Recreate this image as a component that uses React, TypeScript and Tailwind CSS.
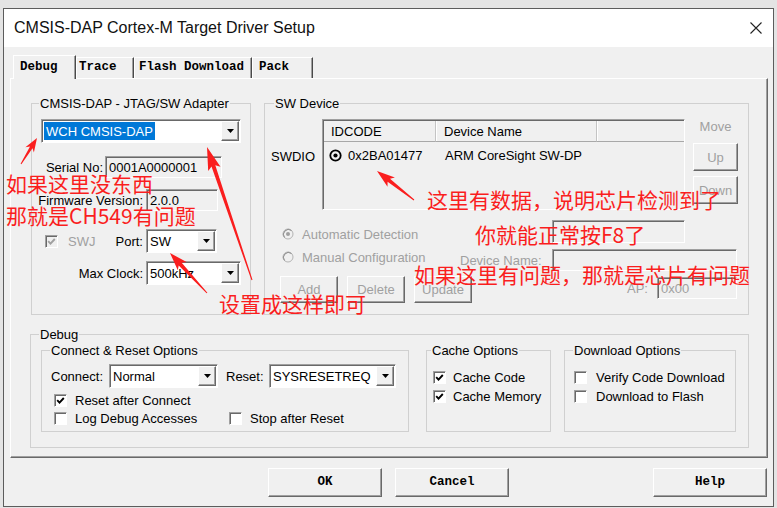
import React from "react";

const SUNK =
  "border border-t-[#a0a0a0] border-l-[#a0a0a0] border-r-white border-b-white shadow-[inset_1px_1px_0_#696969]";
const RAISED =
  "border border-t-white border-l-white border-r-[#696969] border-b-[#696969] shadow-[inset_-1px_-1px_0_#a0a0a0]";
const DIS = "text-[#a0a0a0]";

function arrow(tx: number, ty: number, hx: number, hy: number, hl: number, hw: number, sw: number) {
  const dx = hx - tx;
  const dy = hy - ty;
  const L = Math.hypot(dx, dy);
  const ux = dx / L;
  const uy = dy / L;
  const nx = -uy;
  const ny = ux;
  const bx = hx - ux * hl;
  const by = hy - uy * hl;
  const cx = hx - ux * (hl + 3);
  const cy = hy - uy * (hl + 3);
  const p = [
    [tx + nx * 0.5, ty + ny * 0.5],
    [bx + (nx * sw) / 2, by + (ny * sw) / 2],
    [cx + (nx * hw) / 2, cy + (ny * hw) / 2],
    [hx, hy],
    [cx - (nx * hw) / 2, cy - (ny * hw) / 2],
    [bx - (nx * sw) / 2, by - (ny * sw) / 2],
    [tx - nx * 0.5, ty - ny * 0.5],
  ];
  return p.map((q) => q.map((v) => v.toFixed(1)).join(",")).join(" ");
}

function Combo({ w, pad, children }: { w: string; pad: string; children?: React.ReactNode }) {
  return (
    <div className={`${w} h-[24px] flex bg-white ${SUNK}`}>
      <div className={`flex-1 flex items-center ${pad} overflow-hidden whitespace-nowrap`}>{children}</div>
      <div className={`w-[18px] my-[1px] mr-[1px] flex items-center justify-center bg-[#f0f0f0] ${RAISED}`}>
        <svg width="7" height="4" viewBox="0 0 7 4">
          <path d="M0 0H7L3.5 4Z" fill="#000" />
        </svg>
      </div>
    </div>
  );
}

function Field({ cls, children }: { cls: string; children?: React.ReactNode }) {
  return (
    <div className={`${cls} flex items-center pl-[3px] bg-[#f0f0f0] whitespace-nowrap ${SUNK}`}>{children}</div>
  );
}

function Check({ on, dis }: { on?: boolean; dis?: boolean }) {
  return (
    <div
      className={`w-[13px] h-[13px] shrink-0 flex items-center justify-center ${dis ? "bg-[#f0f0f0]" : "bg-white"} ${SUNK}`}
    >
      {on && (
        <svg width="9" height="9" viewBox="0 0 9 9">
          <path d="M1.2 4.2 L3.5 6.6 L7.8 2" stroke={dis ? "#a0a0a0" : "#000"} strokeWidth="1.9" fill="none" />
        </svg>
      )}
    </div>
  );
}

function Radio({ on }: { on?: boolean }) {
  return (
    <svg width="12" height="12" viewBox="0 0 12 12" className="shrink-0">
      <circle cx="6" cy="6" r="5" fill="#f0f0f0" stroke="#b4b4b4" strokeWidth="1" />
      <path d="M2.5 9.5 A5 5 0 0 1 9.5 2.5" stroke="#8c8c8c" strokeWidth="1" fill="none" />
      {on && <circle cx="6" cy="6" r="2" fill="#a0a0a0" />}
    </svg>
  );
}

function Btn({ cls, children, dis }: { cls: string; children?: React.ReactNode; dis?: boolean }) {
  return (
    <div className={`flex items-center justify-center bg-[#f0f0f0] ${RAISED} ${dis ? DIS : "text-black"} ${cls}`}>
      {children}
    </div>
  );
}

function Tab({ cls, children, sel }: { cls: string; children: React.ReactNode; sel?: boolean }) {
  return (
    <div
      className={`${cls} ${sel ? "h-[24px]" : "h-[21px] mt-[2px]"} bg-[#f0f0f0] border-l border-t border-r border-l-white border-t-white border-r-[#4a4a4a] shadow-[inset_-1px_0_0_#a0a0a0] whitespace-nowrap`}
    >
      {children}
    </div>
  );
}

const RED = "text-[#fa1e1e]";
const CJK = "font-['Noto_Sans_CJK_SC',sans-serif] text-[21px] leading-[21px] whitespace-nowrap";

export default function App() {
  return (
    <div className="relative w-[777px] h-[508px] bg-[#e4e4e4] pt-[8px] px-[3px] font-['Liberation_Sans',Arial,sans-serif] text-[13px] leading-[15px] text-black overflow-hidden">
      <div className="h-[499px] border border-[#5c5c5c] bg-[#f0f0f0] flex flex-col">
        {/* title bar */}
        <div className="h-[38px] shrink-0 bg-white flex items-center pl-[10px] pr-[11px]">
          <span className="text-[16px] leading-[20px] text-[#111]">CMSIS-DAP Cortex-M Target Driver Setup</span>
          <svg className="ml-auto" width="12" height="12" viewBox="0 0 12 12">
            <path d="M0.5 0.5L11.5 11.5M11.5 0.5L0.5 11.5" stroke="#222" strokeWidth="1.1" />
          </svg>
        </div>

        {/* tabs */}
        <div className="mt-[8px] ml-[9px] h-[23px] flex items-start relative z-10 font-['Liberation_Mono',monospace] font-bold text-[12.5px] leading-[15px]">
          <Tab cls="w-[63px] pl-[6px] pt-[4px]" sel>
            Debug
          </Tab>
          <Tab cls="w-[58px] pl-[2px] pt-[2px]">Trace</Tab>
          <Tab cls="w-[118px] pl-[4px] pt-[2px]">Flash Download</Tab>
          <Tab cls="w-[61px] pl-[6px] pt-[2px]">Pack</Tab>
        </div>

        {/* panel */}
        <div className="ml-[6px] w-[758px] h-[380px] shrink-0 border border-t-white border-l-white border-r-[#696969] border-b-[#696969] shadow-[inset_-1px_-1px_0_#a0a0a0] flex flex-col pt-[17px]">
          <div className="flex pl-[20px]">
            {/* adapter group */}
            <fieldset className="w-[220px] h-[219px] border border-[#d0d0d0] min-w-0">
              <legend className="ml-[7px] px-[1px] leading-[15px]">CMSIS-DAP - JTAG/SW Adapter</legend>
              <div className="mt-[8px] ml-[9px]">
                <Combo w="w-[200px]" pad="pl-[2px]">
                  <span className="bg-[#0078d7] text-white px-[2px] h-[18px] flex items-center">WCH CMSIS-DAP</span>
                </Combo>
              </div>
              <div className="mt-[13px] flex items-center">
                <span className="w-[71px] text-right">Serial No:</span>
                <Field cls="ml-[2px] w-[117px] h-[22px]">0001A0000001</Field>
              </div>
              <div className="mt-[11px] flex items-center">
                <span className="w-[111px] text-right">Firmware Version:</span>
                <Field cls="ml-[3px] w-[72px] h-[22px]">2.0.0</Field>
              </div>
              <div className="mt-[18px] flex items-center">
                <div className="w-[111px] flex items-center">
                  <div className="ml-[13px]">
                    <Check on dis />
                  </div>
                  <span className={`ml-[10px] ${DIS}`}>SWJ</span>
                  <span className="ml-auto">Port:</span>
                </div>
                <div className="ml-[3px]">
                  <Combo w="w-[71px]" pad="pl-[3px]">
                    SW
                  </Combo>
                </div>
              </div>
              <div className="mt-[8px] flex items-center">
                <span className="w-[111px] text-right">Max Clock:</span>
                <div className="ml-[3px]">
                  <Combo w="w-[95px]" pad="pl-[3px]">
                    500kHz
                  </Combo>
                </div>
              </div>
            </fieldset>

            {/* SW device group */}
            <fieldset className="ml-[13px] w-[485px] h-[219px] border border-[#d0d0d0] min-w-0">
              <legend className="ml-[9px] px-[1px] leading-[15px]">SW Device</legend>
              <div className="mt-[8px] flex items-start">
                <span className="ml-[6px] w-[51px] mt-[30px]">SWDIO</span>
                <div className={`w-[363px] h-[91px] bg-[#f0f0f0] ${SUNK} flex flex-col`}>
                  <div className="flex h-[21px] mt-[1px] ml-[1px]">
                    <div className="w-[112px] pl-[7px] flex items-center border-r border-b border-r-[#c4c4c4] border-b-[#a8a8a8]">
                      IDCODE
                    </div>
                    <div className="w-[161px] pl-[8px] flex items-center border-r border-b border-r-[#c4c4c4] border-b-[#a8a8a8] shadow-[inset_1px_0_0_#fff]">
                      Device Name
                    </div>
                    <div className="flex-1 border-b border-b-[#a8a8a8] shadow-[inset_1px_0_0_#fff]" />
                  </div>
                  <div className="flex items-center h-[26px] ml-[1px]">
                    <div className="w-[112px] flex items-center">
                      <svg width="13" height="13" viewBox="0 0 13 13" className="ml-[5px] shrink-0">
                        <circle cx="6.5" cy="6.5" r="5.2" fill="none" stroke="#000" strokeWidth="1.8" />
                        <circle cx="6.5" cy="6.5" r="2.1" fill="#000" />
                      </svg>
                      <span className="ml-[6px]">0x2BA01477</span>
                    </div>
                    <span className="pl-[9px]">ARM CoreSight SW-DP</span>
                  </div>
                </div>
                <div className="ml-[8px] w-[45px] flex flex-col">
                  <span className={`text-center ${DIS}`}>Move</span>
                  <Btn cls="mt-[9px] h-[28px]" dis>
                    Up
                  </Btn>
                  <Btn cls="mt-[5px] h-[28px]" dis>
                    Down
                  </Btn>
                </div>
              </div>

              <div className="mt-[10px] flex items-start h-[23px]">
                <div className="ml-[17px] w-[270px] mt-[7px] h-[14px] flex items-center">
                  <Radio on />
                  <span className={`ml-[8px] ${DIS}`}>Automatic Detection</span>
                </div>
                <Field cls="w-[133px] h-[23px]" />
              </div>

              <div className="mt-[6px] flex items-start">
                <div className="ml-[17px] w-[178px] mt-[1px] h-[14px] flex items-center">
                  <Radio />
                  <span className={`ml-[8px] ${DIS}`}>Manual Configuration</span>
                </div>
                <span className={`w-[92px] mt-[4px] ${DIS}`}>Device Name:</span>
                <Field cls="w-[185px] h-[22px]" />
              </div>

              <div className="mt-[5px] flex items-start">
                <Btn cls="ml-[15px] w-[58px] h-[27px]" dis>
                  Add
                </Btn>
                <Btn cls="ml-[9px] w-[58px] h-[27px]" dis>
                  Delete
                </Btn>
                <Btn cls="ml-[9px] w-[58px] h-[27px]" dis>
                  Update
                </Btn>
                <span className={`ml-[155px] w-[30px] mt-[5px] ${DIS}`}>AP:</span>
                <Field cls={`mt-[1px] w-[80px] h-[22px] ${DIS}`}>0x00</Field>
              </div>
            </fieldset>
          </div>

          {/* Debug group */}
          <fieldset className="mt-[12px] ml-[19px] w-[719px] h-[121px] border border-[#d0d0d0] min-w-0">
            <legend className="ml-[8px] px-[1px] leading-[15px]">Debug</legend>
            <div className="flex mt-[1px]">
              <fieldset className="ml-[10px] w-[368px] h-[89px] border border-[#d0d0d0] min-w-0">
                <legend className="ml-[8px] px-[1px] leading-[15px]">Connect &amp; Reset Options</legend>
                <div className="mt-[6px] flex items-center">
                  <span className="ml-[9px] w-[58px]">Connect:</span>
                  <Combo w="w-[109px]" pad="pl-[3px]">
                    Normal
                  </Combo>
                  <span className="ml-[8px] w-[43px]">Reset:</span>
                  <Combo w="w-[127px]" pad="pl-[3px]">
                    SYSRESETREQ
                  </Combo>
                </div>
                <div className="mt-[4px] h-[16px] flex items-center">
                  <div className="ml-[12px]">
                    <Check on />
                  </div>
                  <span className="ml-[8px]">Reset after Connect</span>
                </div>
                <div className="mt-[2px] h-[16px] flex items-center">
                  <div className="ml-[12px] w-[175px] flex items-center">
                    <Check />
                    <span className="ml-[8px]">Log Debug Accesses</span>
                  </div>
                  <Check />
                  <span className="ml-[8px]">Stop after Reset</span>
                </div>
              </fieldset>

              <fieldset className="ml-[17px] w-[125px] h-[89px] border border-[#d0d0d0] min-w-0">
                <legend className="ml-[4px] px-[1px] leading-[15px]">Cache Options</legend>
                <div className="mt-[11px] h-[16px] flex items-center">
                  <div className="ml-[6px]">
                    <Check on />
                  </div>
                  <span className="ml-[7px]">Cache Code</span>
                </div>
                <div className="mt-[3px] h-[16px] flex items-center">
                  <div className="ml-[6px]">
                    <Check on />
                  </div>
                  <span className="ml-[7px]">Cache Memory</span>
                </div>
              </fieldset>

              <fieldset className="ml-[13px] w-[172px] h-[89px] border border-[#d0d0d0] min-w-0">
                <legend className="ml-[8px] px-[1px] leading-[15px]">Download Options</legend>
                <div className="mt-[11px] h-[16px] flex items-center">
                  <div className="ml-[9px]">
                    <Check />
                  </div>
                  <span className="ml-[9px]">Verify Code Download</span>
                </div>
                <div className="mt-[3px] h-[16px] flex items-center">
                  <div className="ml-[9px]">
                    <Check />
                  </div>
                  <span className="ml-[9px]">Download to Flash</span>
                </div>
              </fieldset>
            </div>
          </fieldset>
        </div>

        {/* dialog buttons */}
        <div className="mt-[10px] flex font-['Liberation_Mono',monospace] font-bold text-[12.5px]">
          <Btn cls="ml-[264px] w-[114px] h-[29px]">OK</Btn>
          <Btn cls="ml-[13px] w-[114px] h-[29px]">Cancel</Btn>
          <Btn cls="ml-[144px] w-[114px] h-[29px]">Help</Btn>
        </div>
      </div>

      {/* annotations */}
      <div className={`absolute left-[6px] top-[173px] ${CJK} ${RED}`}>如果这里没东西</div>
      <div className={`absolute left-[6px] top-[205px] ${CJK} ${RED}`}>那就是CH549有问题</div>
      <div className={`absolute left-[427px] top-[189px] ${CJK} ${RED}`}>这里有数据，说明芯片检测到了</div>
      <div className={`absolute left-[475px] top-[224px] ${CJK} ${RED}`}>你就能正常按F8了</div>
      <div className={`absolute left-[414px] top-[264px] ${CJK} ${RED}`}>如果这里有问题，那就是芯片有问题</div>
      <div className={`absolute left-[219px] top-[293px] ${CJK} ${RED}`}>设置成这样即可</div>

      <svg className="absolute left-0 top-0 pointer-events-none" width="777" height="508" viewBox="0 0 777 508">
        <polygon points={arrow(21, 164, 37, 138, 11, 10, 3)} fill="#fa1e1e" />
        <polygon points={arrow(252, 280, 207, 147, 20, 13, 4)} fill="#fa1e1e" />
        <polygon points={arrow(207, 293, 170, 253, 15, 12, 4)} fill="#fa1e1e" />
        <polygon points={arrow(414, 200, 377, 171, 15, 12, 4)} fill="#fa1e1e" />
      </svg>
    </div>
  );
}
